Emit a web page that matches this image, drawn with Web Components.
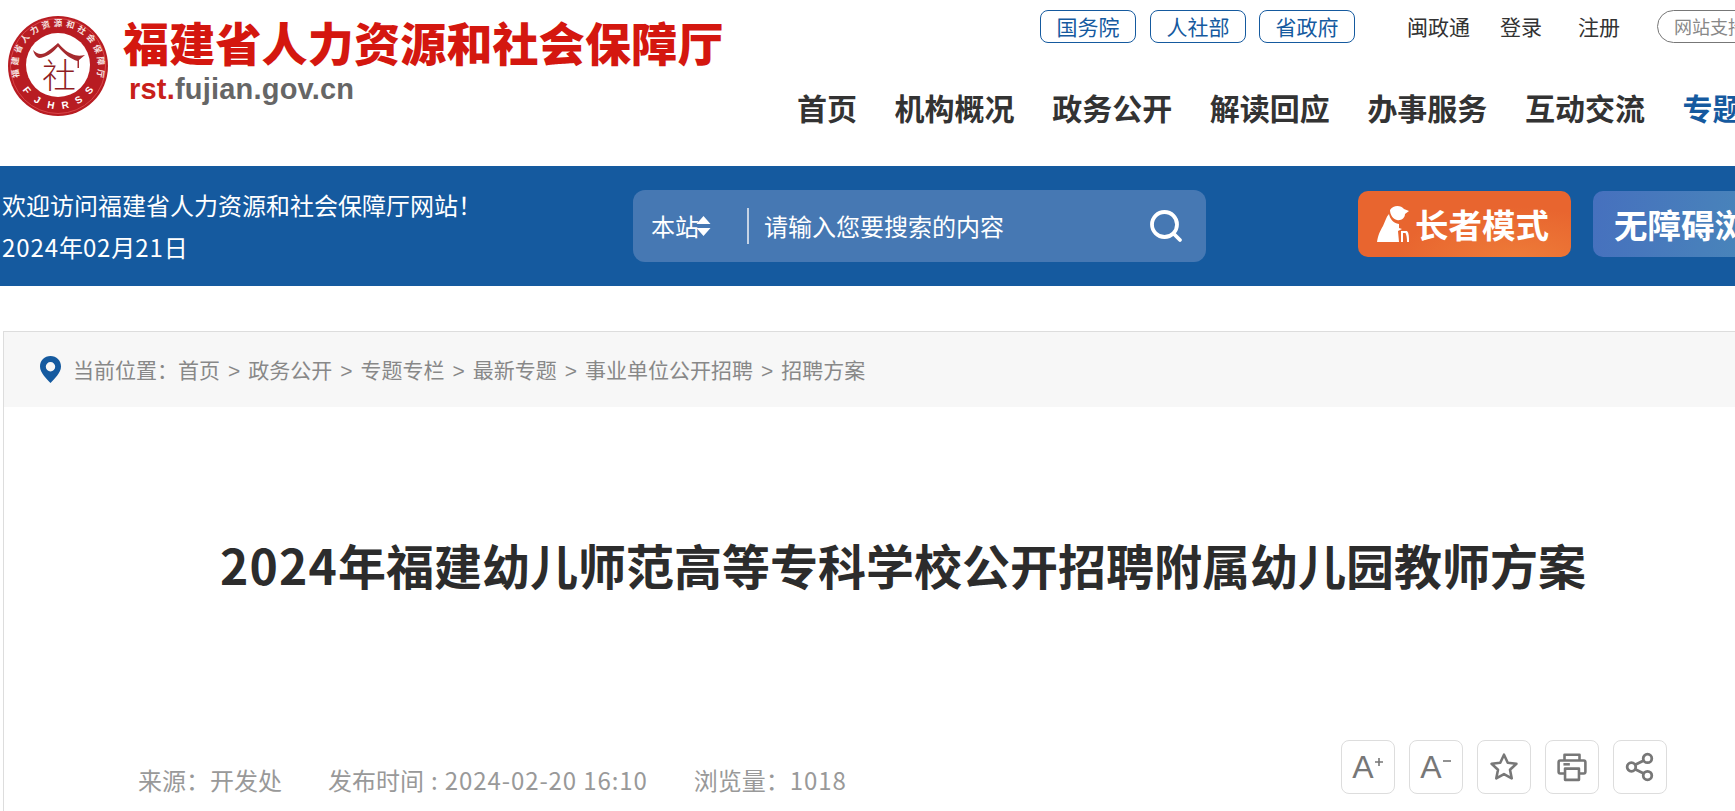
<!DOCTYPE html>
<html lang="zh-CN">
<head>
<meta charset="utf-8">
<title>福建省人力资源和社会保障厅</title>
<style>
    html, body {
        margin: 0;
        padding: 0;
        overflow: hidden;
        height: 811px;
        background: #fff;
    }
    body {
        width: 1806px;
        font-family: "Noto Sans CJK SC", "Liberation Sans", sans-serif;
    }
</style>
</head>
<body>
<site-header></site-header>
<blue-bar></blue-bar>
<article-panel></article-panel>

<script>
const FONT = '"Noto Sans CJK SC", "Liberation Sans", sans-serif'

// seal lettering, one rotated glyph each, turned around the seal's centre
function ringText(chars, from, to, baseY, size, family, fill) {
    const list = Array.from(chars)
    const step = (to - from) / (list.length - 1)
    return list.map((c, i) => `<text transform="rotate(${from + step * i} 51 51)" x="51" y="${baseY}" text-anchor="middle" font-family="${family}" font-size="${size}" font-weight="700" fill="${fill}">${c}</text>`).join('')
}

class SiteLogo extends HTMLElement {
    constructor() {
        super()
        this.attachShadow({mode: 'open'}).innerHTML = `
        <style>
            :host { display: flex; align-items: flex-start; }
            svg { display: block; flex: none; width: 102px; height: 102px; margin: 15px 0 0 7px; }
            .words { margin: 13px 0 0 14px; }
            .name {
                font: 900 46px/56px ${FONT};
                color: #d4170f;
                white-space: nowrap;
                letter-spacing: .2px;
            }
            .url {
                font: bold 29px/32px "Liberation Sans", sans-serif;
                color: #666;
                margin: 4px 0 0 6px;
                letter-spacing: .2px;
            }
            .url b { color: #c8201a; }
        </style>
        <svg viewBox="0 0 102 102">
            <circle cx="51" cy="51" r="50" fill="#b81c22"/>
            <circle cx="51" cy="51" r="47.500" fill="none" stroke="#d9464a" stroke-width="1"/>
            <circle cx="51" cy="50" r="32" fill="#fff"/>
            ${ringText('福建省人力资源和社会保障厅', -100, 100, 11, 8.5, 'Noto Sans CJK SC, sans-serif', '#f6e3e0')}
            ${ringText('FJHRSS', 52, -52, 94, 10, 'Liberation Sans, sans-serif', '#fff')}
            <path d="M26 35 C31 40 36 40 41 36 C45 33 48 31 51 28 C55 32 59 37 65 39 C69 41 73 41 78 40 L72 45 L72 53 L70.500 53 L70.500 46 C64 44 58 40 51 31.500 C46 38 38 43 32 43 C29 42 27 39 26 35Z" fill="#a52a2e"/>
            <text x="52" y="73" text-anchor="middle" font-family="Noto Sans CJK SC, sans-serif" font-size="34" font-weight="300" fill="#8e1c22">社</text>
        </svg>
        <div class="words">
            <div class="name">福建省人力资源和社会保障厅</div>
            <div class="url"><b>rst.</b>fujian.gov.cn</div>
        </div>`
    }
}

class TopLinks extends HTMLElement {
    constructor() {
        super()
        this.attachShadow({mode: 'open'}).innerHTML = `
        <style>
            :host {
                display: flex;
                align-items: center;
                height: 33px;
                padding: 10px 0 0 242px;
                font: 21px/31px ${FONT};
                white-space: nowrap;
            }
            .box {
                box-sizing: border-box;
                width: 96px;
                height: 33px;
                border: 1px solid #155a9f;
                border-radius: 8px;
                color: #155a9f;
                text-align: center;
                margin-right: 14px;
            }
            .box + .box { margin-right: 13px; }
            .plain { color: #333; }
            .pill {
                box-sizing: border-box;
                height: 33px;
                border: 1px solid #777;
                border-radius: 17px;
                padding: 0 16px;
                font-size: 18px;
                color: #888;
            }
        </style>
        <span class="box">国务院</span>
        <span class="box">人社部</span>
        <span class="box">省政府</span>
        <span class="plain" style="margin-left:39px">闽政通</span>
        <span class="plain" style="margin-left:30px">登录</span>
        <span class="plain" style="margin-left:36px">注册</span>
        <span class="pill" style="margin-left:37px">网站支持IPv6</span>`
    }
}

class MainNav extends HTMLElement {
    constructor() {
        super()
        this.attachShadow({mode: 'open'}).innerHTML = `
        <style>
            :host {
                display: flex;
                gap: 37.6px;
                margin: 42px 0 0 -1px;
                font: bold 30px/44px ${FONT};
                color: #333;
                white-space: nowrap;
            }
            .on { color: #155a9f; }
        </style>
        <span>首页</span>
        <span>机构概况</span>
        <span>政务公开</span>
        <span>解读回应</span>
        <span>办事服务</span>
        <span>互动交流</span>
        <span class="on">专题专栏</span>`
    }
}

class SiteHeader extends HTMLElement {
    constructor() {
        super()
        this.attachShadow({mode: 'open'}).innerHTML = `
        <style>
            :host { display: flex; height: 166px; justify-content: space-between; }
            .right { width: 1008px; }
        </style>
        <site-logo></site-logo>
        <div class="right">
            <top-links></top-links>
            <main-nav></main-nav>
        </div>`
    }
}

class SearchBox extends HTMLElement {
    constructor() {
        super()
        this.attachShadow({mode: 'open'}).innerHTML = `
        <style>
            :host {
                display: flex;
                flex: none;
                align-items: center;
                box-sizing: border-box;
                width: 573px;
                height: 72px;
                margin-left: 166px;
                padding: 0 23px 0 18px;
                border-radius: 12px;
                background: #4678b3;
                color: #fff;
                font: 24px/36px ${FONT};
                white-space: nowrap;
            }
            .arrows { display: block; margin-left: -3px; }
            .scope { width: 96px; display: flex; align-items: center; }
            .rule { width: 2px; height: 36px; background: #c5d3e5; margin-right: 15px; }
            .hint { flex: 1; }
            .loupe { display: block; }
        </style>
        <span class="scope">本站<svg class="arrows" width="15" height="24" viewBox="0 0 15 24"><path d="M7.5 2 L14.5 10 L.5 10Z M7.5 22 L14.5 14 L.5 14Z" fill="#fff"/></svg></span>
        <span class="rule"></span>
        <span class="hint">请输入您要搜索的内容</span>
        <svg class="loupe" width="34" height="34" viewBox="0 0 34 34" fill="none" stroke="#fff" stroke-width="3.8" stroke-linecap="round">
            <circle cx="15.5" cy="15.5" r="12.5"/>
            <path d="M25 25 L31 31"/>
        </svg>`
    }
}

class ModeButton extends HTMLElement {
    constructor() {
        super()
        this.attachShadow({mode: 'open'}).innerHTML = `
        <style>
            :host {
                display: flex;
                flex: none;
                align-items: center;
                box-sizing: border-box;
                height: 66px;
                border-radius: 10px;
                color: #fff;
                font: bold 33.5px/48px ${FONT};
                white-space: nowrap;
                margin-top: -4px;
            }
        </style>
        <slot></slot>`
    }
}

class BlueBar extends HTMLElement {
    constructor() {
        super()
        this.attachShadow({mode: 'open'}).innerHTML = `
        <style>
            :host {
                display: flex;
                align-items: center;
                height: 120px;
                background: #155a9f;
                color: #fff;
            }
            .welcome {
                flex: none;
                width: 465px;
                padding-left: 2px;
                font: 24px/42px ${FONT};
                white-space: nowrap;
            }
            .welcome span { letter-spacing: .9px; }
            .elder {
                width: 213px;
                margin-left: 152px;
                padding-left: 19px;
                background: radial-gradient(ellipse at 75% 110%, #ee7d39 0, #e8652f 55%);
            }
            .elder svg { display: block; margin-right: 6px; flex: none; }
            .easy {
                width: 230px;
                margin-left: 22px;
                padding-left: 21px;
                background: linear-gradient(100deg, #4670be, #4a8fb8);
            }
        </style>
        <div class="welcome">欢迎访问福建省人力资源和社会保障厅网站！<br><span>2024</span>年<span>02</span>月<span>21</span>日</div>
        <search-box></search-box>
        <mode-button class="elder">
            <svg width="32" height="38" viewBox="0 0 32 38" fill="#fff">
                <path d="M13 5 C16 0 24 0 27 4 L32 6 L28 9 C28 13 24 16 20 15 C16 14 13 10 13 5Z"/>
                <path d="M12 9 C13 14 16 18 22 19 L22 23 L25 24 L21 26 L22 37 L0 37 C1 30 3 26 6 21 C8 17 9 12 12 9Z"/>
                <path d="M24 26 L30 26 C32 28 32 32 32 37 L30 37 C30 33 29.500 30 28.500 28 L26 28 L26 37 L24 37Z"/>
            </svg>长者模式
        </mode-button>
        <mode-button class="easy">无障碍浏览</mode-button>`
    }
}

class CrumbTrail extends HTMLElement {
    constructor() {
        super()
        const parts = ['首页', '政务公开', '专题专栏', '最新专题', '事业单位公开招聘', '招聘方案']
        this.attachShadow({mode: 'open'}).innerHTML = `
        <style>
            :host {
                display: flex;
                align-items: center;
                height: 75px;
                padding-left: 36px;
                background: #f7f7f7;
                color: #888;
                font: 21px/30px ${FONT};
                white-space: nowrap;
            }
            svg { display: block; margin-right: 12px; }
            i { font-style: normal; margin: 0 8px; font-family: "Liberation Sans", sans-serif; }
        </style>
        <svg width="21" height="27" viewBox="0 0 21 27">
            <path fill-rule="evenodd" fill="#155a9f" d="M10.5 0 C16.5 0 21 4.5 21 10.5 C21 17 14 23 10.5 27 C7 23 0 17 0 10.5 C0 4.5 4.5 0 10.5 0Z M10.5 6 A4.7 4.7 0 1 0 10.5 15.4 A4.7 4.7 0 1 0 10.5 6Z"/>
        </svg>
        <span>当前位置：${parts.join('<i>&gt;</i>')}</span>`
    }
}

class ToolButton extends HTMLElement {
    constructor() {
        super()
        this.attachShadow({mode: 'open'}).innerHTML = `
        <style>
            :host {
                display: flex;
                flex: none;
                align-items: center;
                justify-content: center;
                box-sizing: border-box;
                width: 54px;
                height: 54px;
                border: 1px solid #ddd;
                border-radius: 8px;
                color: #777;
                font: 32px/32px "Liberation Sans", sans-serif;
            }
            ::slotted(svg) { display: block; }
        </style>
        <slot></slot>`
    }
}

class ArticlePanel extends HTMLElement {
    constructor() {
        super()
        this.attachShadow({mode: 'open'}).innerHTML = `
        <style>
            :host {
                display: block;
                box-sizing: border-box;
                width: 1803px;
                height: 480px;
                margin: 45px 0 0 3px;
                border: 1px solid #ddd;
                border-bottom: 0;
            }
            h1 {
                margin: 122px 0 0;
                padding-right: 3px;
                font: bold 48px/70px ${FONT};
                color: #2c2c2c;
                text-align: center;
                white-space: nowrap;
            }
            h1 span { letter-spacing: 1.2px; }
            .meta {
                display: flex;
                align-items: flex-start;
                justify-content: space-between;
                margin-top: 141px;
                padding: 0 138px 0 134px;
            }
            .info {
                display: flex;
                gap: 46px;
                margin-top: 22px;
                color: #999;
                font: 24px/36px ${FONT};
                white-space: nowrap;
            }
            .info .when { word-spacing: 1.7px; }
            .info span span { letter-spacing: .9px; word-spacing: 0; }
            .tools { display: flex; gap: 14px; color: #777; }
            .a { font-weight: 400; }
        </style>
        <crumb-trail></crumb-trail>
        <h1><span>2024</span>年福建幼儿师范高等专科学校公开招聘附属幼儿园教师方案</h1>
        <div class="meta">
            <div class="info">
                <span>来源：开发处</span>
                <span class="when">发布时间 : <span>2024-02-20 16:10</span></span>
                <span>浏览量：<span>1018</span></span>
            </div>
            <div class="tools">
                <tool-button><span class="a">A</span><svg width="10" height="22" viewBox="0 0 10 22" stroke="#777" stroke-width="1.6"><path d="M1 6 H9 M5 2 V10"/></svg></tool-button>
                <tool-button><span class="a">A</span><svg width="10" height="22" viewBox="0 0 10 22" stroke="#777" stroke-width="1.6"><path d="M1 5 H9"/></svg></tool-button>
                <tool-button>
                    <svg width="30" height="30" viewBox="0 0 28 28" fill="none" stroke="#777" stroke-width="2.4" stroke-linejoin="round"><path d="M14 2.5 L17.5 10 L25.6 11 L19.6 16.5 L21.2 24.6 L14 20.6 L6.8 24.6 L8.4 16.500 L2.4 11 L10.5 10Z"/></svg>
                </tool-button>
                <tool-button>
                    <svg width="30" height="30" viewBox="0 0 28 28" fill="none" stroke="#777" stroke-width="2.4" stroke-linejoin="round"><path d="M7 8 V2.5 H21 V8"/><path d="M7 20 H3 Q1.500 20 1.500 18.500 V9.500 Q1.500 8 3 8 H25 Q26.500 8 26.500 9.500 V18.500 Q26.500 20 25 20 H21"/><path d="M7.5 15.500 H20.500 V26 H7.500Z"/><path d="M6 11.500 H12"/></svg>
                </tool-button>
                <tool-button>
                    <svg width="30" height="30" viewBox="0 0 28 28" fill="none" stroke="#777" stroke-width="2.6"><circle cx="21" cy="6" r="4"/><circle cx="6" cy="14" r="4"/><circle cx="21" cy="22" r="4"/><path d="M9.500 12 L17.500 8 M9.500 16 L17.500 20"/></svg>
                </tool-button>
            </div>
        </div>`
    }
}

customElements.define('site-logo', SiteLogo)
customElements.define('top-links', TopLinks)
customElements.define('main-nav', MainNav)
customElements.define('site-header', SiteHeader)
customElements.define('search-box', SearchBox)
customElements.define('mode-button', ModeButton)
customElements.define('blue-bar', BlueBar)
customElements.define('crumb-trail', CrumbTrail)
customElements.define('tool-button', ToolButton)
customElements.define('article-panel', ArticlePanel)
</script>
</body>
</html>
